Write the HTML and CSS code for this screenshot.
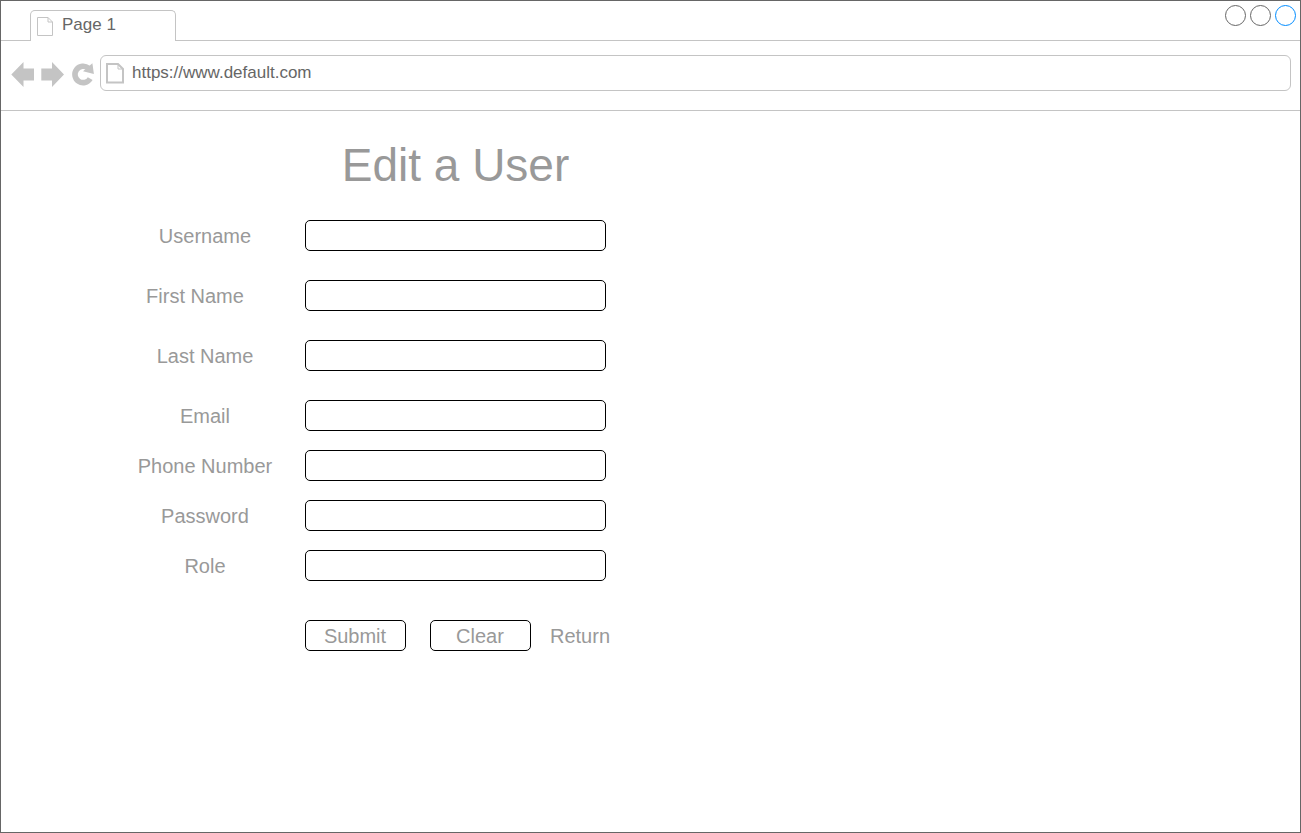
FILE: index.html
```html
<!DOCTYPE html>
<html lang="en">
<head>
<meta charset="utf-8">
<title>Edit a User</title>
<link rel="stylesheet" href="styles.css">
</head>
<body>
<div class="browser">
  <div class="tabstrip">
    <div class="strip-lead"></div>
    <div class="tab">
      <svg class="tab-icon" width="17" height="20" viewBox="0 0 17 20" fill="none" stroke="#c4c4c4"><path d="M.5.5H11L15.500 5V18.500H.5ZM11 .5V5H15.500"/></svg>
      <span>Page 1</span>
    </div>
    <div class="strip-rest">
      <i class="dot"></i><i class="dot"></i><i class="dot dot-active"></i>
    </div>
  </div>
  <div class="toolbar">
    <svg class="nav" width="90" height="30" viewBox="0 0 90 30" fill="#c4c4c4">
      <path d="M6.300 15.500 18.500 3V9.500H29V21.500H18.500V28Z"/>
      <path d="M59 15.500 47 3V9.500H36.300V21.500H47V28Z"/>
      <path d="M85.200 19.600A8.200 8.200 0 1 1 83.500 9.200" fill="none" stroke="#c4c4c4" stroke-width="5.600"/>
      <path d="M87.400 4.300 88.900 15 78 12.200Z"/>
    </svg>
    <div class="address">
      <svg class="page-icon" width="18" height="21" viewBox="0 0 18 21" fill="none" stroke="#c4c4c4" stroke-width="2"><path d="M1 1H12L17 6V19.500H1Z"/><path d="M12 1V6H17" stroke-width="1"/></svg>
      <span>https://www.default.com</span>
    </div>
  </div>
  <form class="form">
    <h1 class="title">Edit a User</h1>
    <div class="row"><label class="label" for="user">Username</label><input class="field" id="user"></div>
    <div class="row"><label class="label label-shifted" for="first">First Name</label><input class="field" id="first"></div>
    <div class="row"><label class="label" for="last">Last Name</label><input class="field" id="last"></div>
    <div class="row row-close"><label class="label" for="email">Email</label><input class="field" id="email"></div>
    <div class="row row-close"><label class="label" for="phone">Phone Number</label><input class="field" id="phone"></div>
    <div class="row row-close"><label class="label" for="pass">Password</label><input class="field" id="pass"></div>
    <div class="row row-last"><label class="label" for="role">Role</label><input class="field" id="role"></div>
    <div class="actions">
      <button class="button" type="button">Submit</button>
      <button class="button" type="button">Clear</button>
      <span class="return">Return</span>
    </div>
  </form>
</div>
</body>
</html>
```
FILE: styles.css
```css
* { box-sizing: border-box; }

body {
  margin: 0;
  background: #fff;
  font-family: "Liberation Sans", Arial, sans-serif;
}

.browser {
  height: 833px;
  border: 1px solid #666;
  overflow: hidden;
}

.tabstrip {
  display: flex;
  height: 40px;
  color: #666;
  font-size: 17px;
}

.strip-lead {
  width: 29px;
  border-bottom: 1px solid #c4c4c4;
}

.tab {
  display: flex;
  width: 146px;
  margin-top: 9px;
  padding: 4px 0 0 6px;
  border: 1px solid #c4c4c4;
  border-bottom: 0;
  border-radius: 5px 5px 0 0;
  line-height: 20px;
}

.tab-icon { margin: 2px 8px 0 0; }

.strip-rest {
  display: flex;
  flex: 1;
  justify-content: flex-end;
  gap: 4px;
  padding: 4px 4px 0 0;
  border-bottom: 1px solid #c4c4c4;
}

.dot {
  width: 21px;
  height: 21px;
  border: 1px solid #666;
  border-radius: 50%;
}

.dot-active { border-color: #008cff; }

.toolbar {
  display: flex;
  height: 70px;
  padding: 14px 9px 0 4px;
  border-bottom: 1px solid #c4c4c4;
}

.nav { margin-top: 4px; }

.address {
  display: flex;
  flex: 1;
  height: 36px;
  margin-left: 5px;
  padding: 8px 0 0 5px;
  border: 1px solid #c4c4c4;
  border-radius: 6px;
  color: #666;
  font-size: 17px;
  line-height: 18px;
}

.page-icon { margin: -1px 8px 0 0; }

.form {
  width: 620px;
  color: #999;
  font-size: 20px;
}

.title {
  margin: 0 0 29px 304px;
  padding-top: 28px;
  width: 301px;
  text-align: center;
  font-size: 46px;
  font-weight: 400;
  line-height: 52px;
}

.row {
  display: flex;
  height: 31px;
  margin-bottom: 29px;
  padding-left: 104px;
}

.row-close { margin-bottom: 19px; }
.row-last { margin-bottom: 39px; }

.label {
  width: 200px;
  line-height: 32px;
  text-align: center;
}

.label-shifted { padding-right: 20px; }

.field {
  width: 301px;
  height: 31px;
  border: 1px solid #000;
  border-radius: 5px;
  background: #fff;
}

.actions {
  display: flex;
  padding-left: 304px;
}

.button {
  width: 101px;
  height: 31px;
  margin-right: 24px;
  padding: 1px 1px 0 0;
  border: 1px solid #000;
  border-radius: 5px;
  background: #fff;
  color: #999;
  font: inherit;
}

.return {
  margin-left: -5px;
  line-height: 32px;
}
```
